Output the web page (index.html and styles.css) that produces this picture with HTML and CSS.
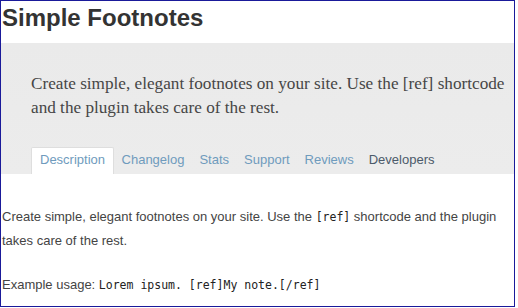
FILE: index.html
```html
<!DOCTYPE html>
<html>
<head>
<meta charset="utf-8">
<link rel="stylesheet" href="styles.css">
</head>
<body>
<div class="frame">
  <h1 class="title">Simple Footnotes</h1>
  <div class="banner">
    <p class="lead">Create simple, elegant footnotes on your site. Use the [ref] shortcode and the plugin takes care of the rest.</p>
    <nav class="tabs">
      <span class="tab active">Description</span>
      <span class="tab">Changelog</span>
      <span class="tab">Stats</span>
      <span class="tab">Support</span>
      <span class="tab">Reviews</span>
      <span class="tab dark">Developers</span>
    </nav>
  </div>
  <div class="content">
    <p>Create simple, elegant footnotes on your site. Use the <code>[ref]</code> shortcode and the plugin takes care of the rest.</p>
    <p>Example usage: <code>Lorem ipsum. [ref]My note.[/ref]</code></p>
  </div>
</div>
</body>
</html>
```
FILE: styles.css
```css
html, body {
  margin: 0;
  padding: 0;
  background: #fff;
}
.frame {
  width: 515px;
  height: 307px;
  border: 1px solid #1a1a9a;
  box-sizing: border-box;
  overflow: hidden;
  font-family: "Liberation Sans", Arial, sans-serif;
}
.title {
  margin: 0;
  padding: 2px 0 0 1px;
  height: 42px;
  box-sizing: border-box;
  font-size: 24px;
  font-weight: bold;
  color: #333;
  line-height: 30px;
}
.banner {
  background: linear-gradient(#eaeaea, #ececec);
  padding: 29px 0 0 30px;
  height: 131px;
  box-sizing: border-box;
  display: flex;
  flex-direction: column;
  justify-content: space-between;
}
.lead {
  margin: 0;
  font-family: "Liberation Serif", Georgia, serif;
  font-size: 17.2px;
  line-height: 24px;
  color: #464646;
  width: 482px;
}
.tabs {
  display: flex;
}
.tab {
  font-size: 13px;
  color: #6f9bbd;
  padding: 5px 7.5px 6px;
  line-height: 16px;
}
.tab.active {
  background: #fff;
  border: 1px solid #dedede;
  border-bottom: none;
  border-radius: 2px 2px 0 0;
  padding: 4px 8px 6px;
}
.tab.dark {
  color: #4b5a6a;
}
.content {
  padding: 31px 0 0 1px;
  font-size: 13px;
  color: #444;
  line-height: 24px;
}
.content p {
  margin: 0 0 20px;
}
.content code {
  font-family: "DejaVu Sans Mono", "Liberation Mono", monospace;
  font-size: 11.5px;
  line-height: 1;
  color: #222;
}
```
